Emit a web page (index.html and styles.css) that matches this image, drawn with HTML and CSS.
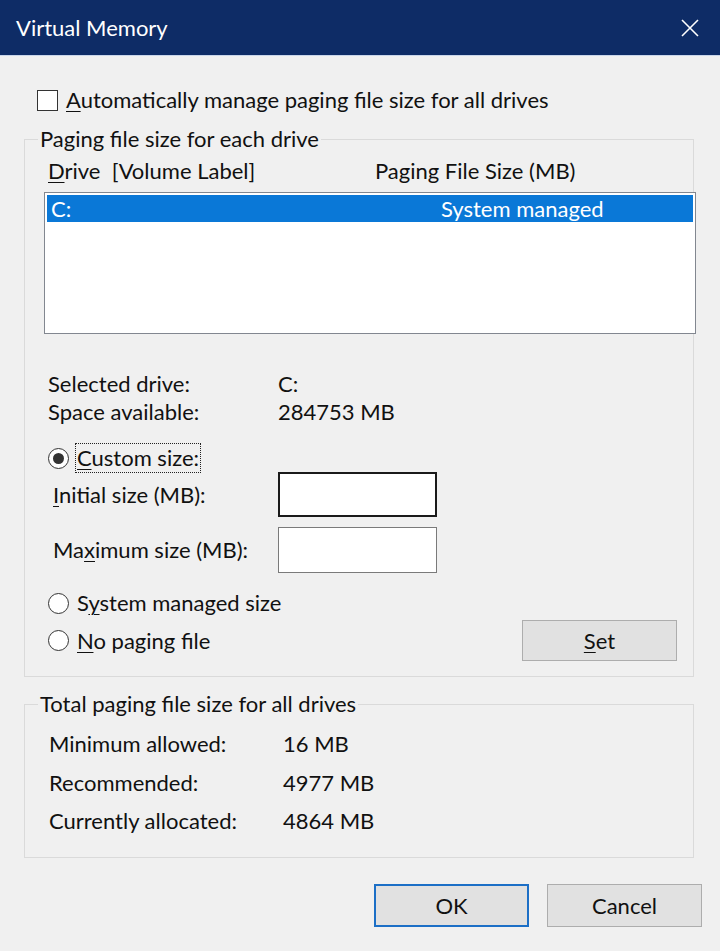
FILE: index.html
```html
<!DOCTYPE html>
<html lang="en">
<head>
    <meta charset="UTF-8">
    <meta name="viewport" content="width=device-width, initial-scale=1.0">
    <title>Virtual Memory</title>
    <link rel="stylesheet" href="styles.css">
</head>
<body>
    <div class="window">
        <div class="titlebar">
            <span class="title">Virtual Memory</span>
            <svg class="close" width="18" height="18" viewBox="0 0 18 18">
                <path d="M1 1 L17 17 M17 1 L1 17" stroke="#ffffff" stroke-width="1.6" fill="none"/>
            </svg>
        </div>

        <div class="content">
            <label class="check-row">
                <span class="checkbox"></span>
                <span><u>A</u>utomatically manage paging file size for all drives</span>
            </label>

            <fieldset class="group drives">
                <legend>Paging file size for each drive</legend>
                <div class="group-body">
                    <div class="list-head">
                        <span><u>D</u>rive&nbsp; [Volume Label]</span>
                        <span>Paging File Size (MB)</span>
                    </div>
                    <div class="listbox">
                        <div class="list-row selected">
                            <span>C:</span>
                            <span>System managed</span>
                        </div>
                    </div>

                    <div class="info-grid">
                        <span>Selected drive:</span><span>C:</span>
                        <span>Space available:</span><span>284753 MB</span>
                    </div>

                    <div class="radio-row custom">
                        <span class="radio checked"></span>
                        <span class="focus-label"><u>C</u>ustom size:</span>
                    </div>
                    <div class="field-row first">
                        <span class="field-label"><u>I</u>nitial size (MB):</span>
                        <span class="textbox focused"></span>
                    </div>
                    <div class="field-row">
                        <span class="field-label">Ma<u>x</u>imum size (MB):</span>
                        <span class="textbox"></span>
                    </div>

                    <div class="radio-row system">
                        <span class="radio"></span>
                        <span class="radio-label">S<u>y</u>stem managed size</span>
                    </div>
                    <div class="radio-row nopaging">
                        <div class="radio-left">
                            <span class="radio"></span>
                            <span class="radio-label"><u>N</u>o paging file</span>
                        </div>
                        <button class="btn set"><u>S</u>et</button>
                    </div>
                </div>
            </fieldset>

            <fieldset class="group totals">
                <legend>Total paging file size for all drives</legend>
                <div class="group-body">
                    <div class="totals-grid">
                        <span>Minimum allowed:</span><span>16 MB</span>
                        <span>Recommended:</span><span>4977 MB</span>
                        <span>Currently allocated:</span><span>4864 MB</span>
                    </div>
                </div>
            </fieldset>

            <div class="dialog-buttons">
                <button class="btn default">OK</button>
                <button class="btn">Cancel</button>
            </div>
        </div>
    </div>
</body>
</html>
```

FILE: styles.css
```css
:root {
    --title-bg: #0e2c66;
    --dialog-bg: #f0f0f0;
    --text: #111111;
    --group-border: #dadada;
    --select-bg: #0a78d7;
    --btn-bg: #e1e1e1;
    --btn-border: #adadad;
}

* {
    box-sizing: border-box;
}

body {
    margin: 0;
    font-family: 'Lato', 'Liberation Sans', sans-serif;
    font-size: 22px;
    line-height: 28px;
    color: var(--text);
    background-color: var(--dialog-bg);
}

u {
    text-decoration-thickness: 1px;
    text-underline-offset: 3px;
}

.window {
    width: 720px;
    height: 951px;
    background-color: var(--dialog-bg);
}

.titlebar {
    height: 56px;
    background-color: var(--title-bg);
    display: flex;
    align-items: center;
    justify-content: space-between;
    padding: 0 21px 0 16px;
    border-bottom: 1px solid #c9d6ea;
}

.title {
    color: #ffffff;
    font-size: 22px;
}

.content {
    padding: 30px 0 0 24px;
}

.check-row {
    display: flex;
    align-items: center;
    gap: 8px;
    height: 28px;
    margin-left: 13px;
}

.checkbox {
    width: 21px;
    height: 21px;
    border: 1px solid #333333;
    background-color: #ffffff;
}

/* group boxes */
.group {
    width: 670px;
    margin: 0;
    padding: 0;
    border: 1px solid var(--group-border);
    min-inline-size: 0;
}

.group legend {
    margin-left: 13px;
    padding: 0 2px;
    line-height: 28px;
}

.drives {
    margin-top: 11px;
}

.drives .group-body {
    padding: 4px 0 15px 23px;
}

.list-head {
    display: grid;
    grid-template-columns: 327px auto;
    height: 28px;
}

.listbox {
    margin: 7px 0 0 -4px;
    width: 652px;
    height: 142px;
    border: 1px solid #828790;
    background-color: #ffffff;
    padding: 2px;
}

.list-row {
    display: grid;
    grid-template-columns: 390px auto;
    height: 27px;
    line-height: 27px;
    padding-left: 4px;
}

.list-row.selected {
    background-color: var(--select-bg);
    color: #ffffff;
}

.info-grid {
    display: grid;
    grid-template-columns: 230px auto;
    margin-top: 36px;
}

.radio-row {
    display: flex;
    align-items: center;
    gap: 6px;
    height: 28px;
}

.radio-left {
    display: flex;
    align-items: center;
    gap: 6px;
}

.radio {
    width: 21px;
    height: 21px;
    border: 1px solid #333333;
    border-radius: 50%;
    background-color: #ffffff;
    display: flex;
    align-items: center;
    justify-content: center;
}

.radio.checked::after {
    content: "";
    width: 11px;
    height: 11px;
    border-radius: 50%;
    background-color: #333333;
}

.radio-label {
    padding-left: 2px;
}

.radio-row.custom {
    margin-top: 18px;
    height: 28px;
}

.focus-label {
    border: 1px dotted #222222;
    padding: 0 1px;
    line-height: 28px;
}

.field-row {
    display: flex;
    align-items: center;
    padding-left: 5px;
    margin-top: 10px;
}

.field-row.first {
    margin-top: 0;
}

.field-label {
    width: 225px;
}

.textbox {
    width: 159px;
    height: 46px;
    background-color: #ffffff;
    border: 1px solid #7a7a7a;
}

.textbox.focused {
    height: 45px;
    border: 2px solid #1a1a1a;
}

.radio-row.system {
    margin-top: 16px;
}

.radio-row.nopaging {
    margin-top: 3px;
    height: 41px;
    justify-content: space-between;
    padding-right: 16px;
}

/* buttons */
.btn {
    font-family: inherit;
    font-size: 22px;
    color: var(--text);
    background-color: var(--btn-bg);
    border: 1px solid var(--btn-border);
    padding: 0;
    border-radius: 0;
}

.btn.set {
    width: 155px;
    height: 41px;
}

.totals {
    margin-top: 13px;
}

.totals .group-body {
    padding: 7px 0 16px 24px;
}

.totals-grid {
    display: grid;
    grid-template-columns: 234px auto;
    grid-auto-rows: 38.5px;
    align-items: center;
}

.dialog-buttons {
    display: flex;
    justify-content: flex-end;
    gap: 18px;
    margin-top: 26px;
    padding-right: 18px;
}

.dialog-buttons .btn {
    width: 155px;
    height: 43px;
}

.btn.default {
    border: 2px solid #1c6fc6;
}
```
